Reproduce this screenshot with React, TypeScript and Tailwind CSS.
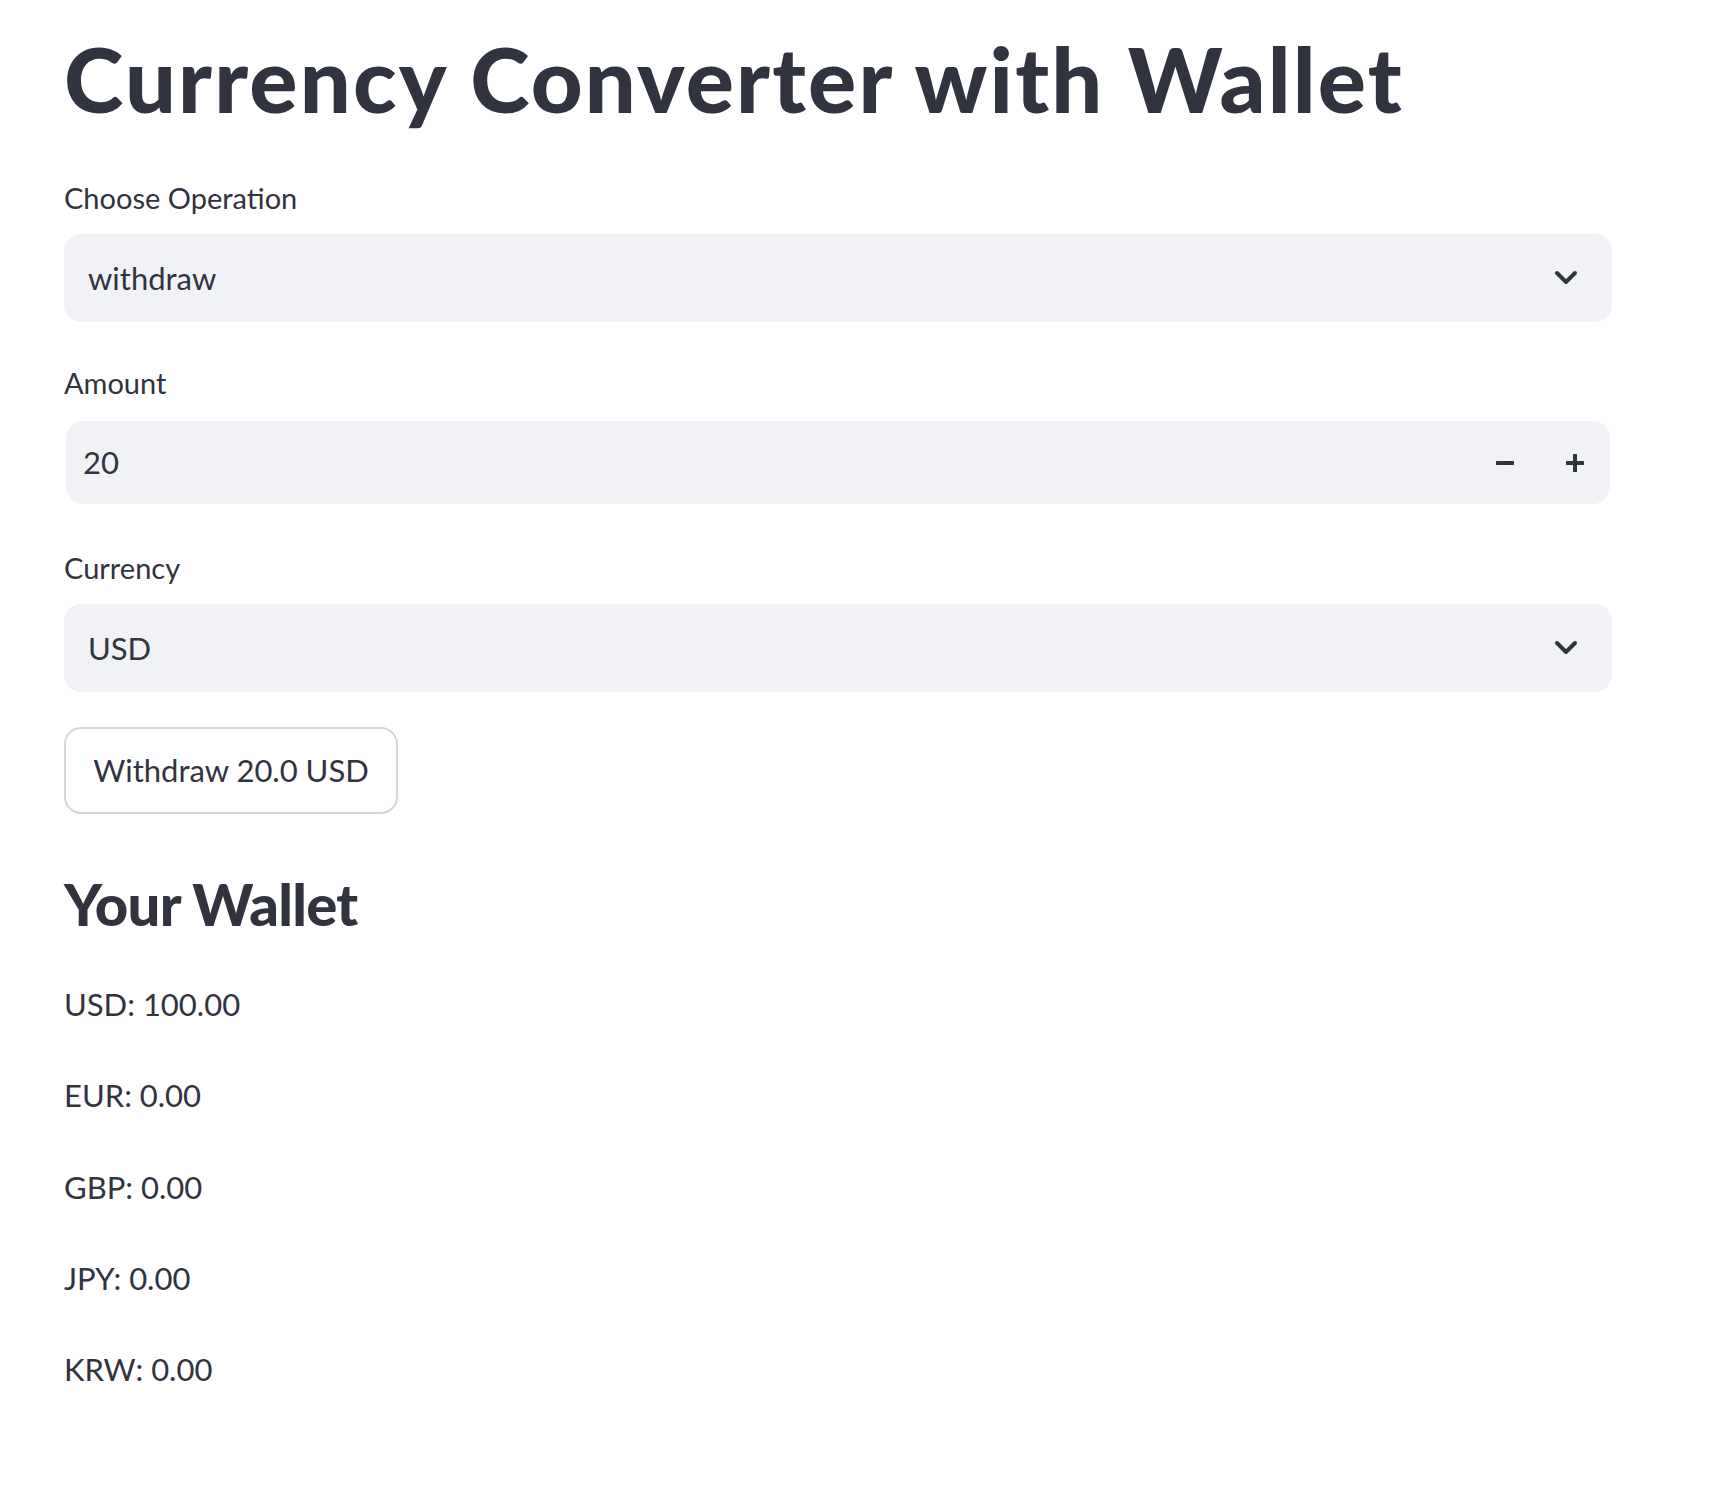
const font = { fontFamily: 'Lato, "Noto Sans", sans-serif' };

const Chevron = () => (
  <svg width="24" height="16" viewBox="0 0 24 16" fill="none">
    <polyline points="3,3 12,12 21,3" stroke="#31333F" strokeWidth="4" strokeLinecap="round" strokeLinejoin="round" />
  </svg>
);

const Label = ({ children, className }: { children: string; className: string }) => (
  <div className={`text-[29px] leading-[40px] ${className}`}>{children}</div>
);

const Select = ({ value, className }: { value: string; className: string }) => (
  <div className={`h-[88px] rounded-[17px] bg-[#f0f2f6] flex items-center justify-between pl-[24px] pr-[34px] ${className}`}>
    <span className="text-[31px]">{value}</span>
    <Chevron />
  </div>
);

export default function App() {
  const wallet = [
    ['USD', 100],
    ['EUR', 0],
    ['GBP', 0],
    ['JPY', 0],
    ['KRW', 0],
  ] as const;

  return (
    <div className="min-h-[1490px] bg-white text-[#31333F] pl-[64px] pt-[24px]" style={font}>
      <div className="w-[1548px]">
        <h1 className="text-[90px] leading-[108px] font-black tracking-[2.2px]">Currency Converter with Wallet</h1>

        <Label className="mt-[46px]">Choose Operation</Label>
        <Select value="withdraw" className="mt-[16px]" />

        <Label className="mt-[41px]">Amount</Label>
        <div className="mt-[18px] mx-[2px] h-[83px] rounded-[17px] bg-[#f0f2f6] flex items-center pl-[17px] pr-[26px]">
          <span className="text-[31px] flex-1">20</span>
          <div className="flex items-center gap-[52px]">
            <svg width="18" height="18" viewBox="0 0 18 18">
              <rect x="0" y="7" width="18" height="4" rx="0.5" fill="#31333F" />
            </svg>
            <svg width="18" height="18" viewBox="0 0 18 18">
              <rect x="0" y="7" width="18" height="4" rx="0.5" fill="#31333F" />
              <rect x="7" y="0" width="4" height="18" rx="0.5" fill="#31333F" />
            </svg>
          </div>
        </div>

        <Label className="mt-[44px]">Currency</Label>
        <Select value="USD" className="mt-[16px]" />

        <button className="mt-[35px] h-[87px] w-[334px] rounded-[17px] border-2 border-[#d5d6d9] bg-white text-[31px] flex items-center justify-center">
          Withdraw 20.0 USD
        </button>

        <h3 className="mt-[55px] text-[58px] leading-[70px] font-black tracking-[-0.75px]">Your Wallet</h3>

        <div className="mt-[45px] flex flex-col gap-[51.3px]">
          {wallet.map(([code, amt]) => (
            <p key={code} className="text-[31px] leading-[40px]">
              {code}: {amt.toFixed(2)}
            </p>
          ))}
        </div>
      </div>
    </div>
  );
}
